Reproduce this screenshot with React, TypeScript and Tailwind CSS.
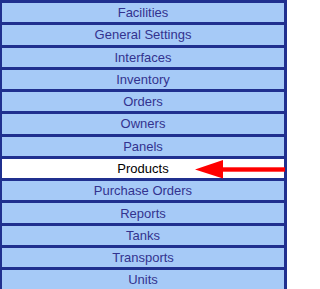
import React from "react";

const items = [
  "Facilities",
  "General Settings",
  "Interfaces",
  "Inventory",
  "Orders",
  "Owners",
  "Panels",
  "Products",
  "Purchase Orders",
  "Reports",
  "Tanks",
  "Transports",
  "Units",
];

export default function App() {
  return (
    <div
      className="w-[287px] h-[289px] overflow-hidden bg-[#20308f] pt-[3px] pl-[2px] pr-[3px] flex flex-col gap-[3px]"
      style={{ fontFamily: '"Liberation Sans", Arial, sans-serif' }}
    >
      {items.map((label) =>
        label === "Products" ? (
          <div
            key={label}
            className="relative h-[19.27px] shrink-0 bg-white flex items-center justify-center text-[13px] leading-none text-black"
          >
            <span>{label}</span>
            <svg
              className="absolute left-[193px] top-0 overflow-visible"
              width="90"
              height="20"
              viewBox="0 0 90 20"
            >
              <polygon points="0,10.4 28,1 28,19.6" fill="#ff0000" />
              <rect x="26" y="8.3" width="64" height="4.4" fill="#ff0000" />
            </svg>
          </div>
        ) : (
          <div
            key={label}
            className="h-[19.27px] shrink-0 bg-[#a6caf7] flex items-center justify-center text-[13px] leading-none text-[#33338f]"
          >
            <span>{label}</span>
          </div>
        )
      )}
    </div>
  );
}
